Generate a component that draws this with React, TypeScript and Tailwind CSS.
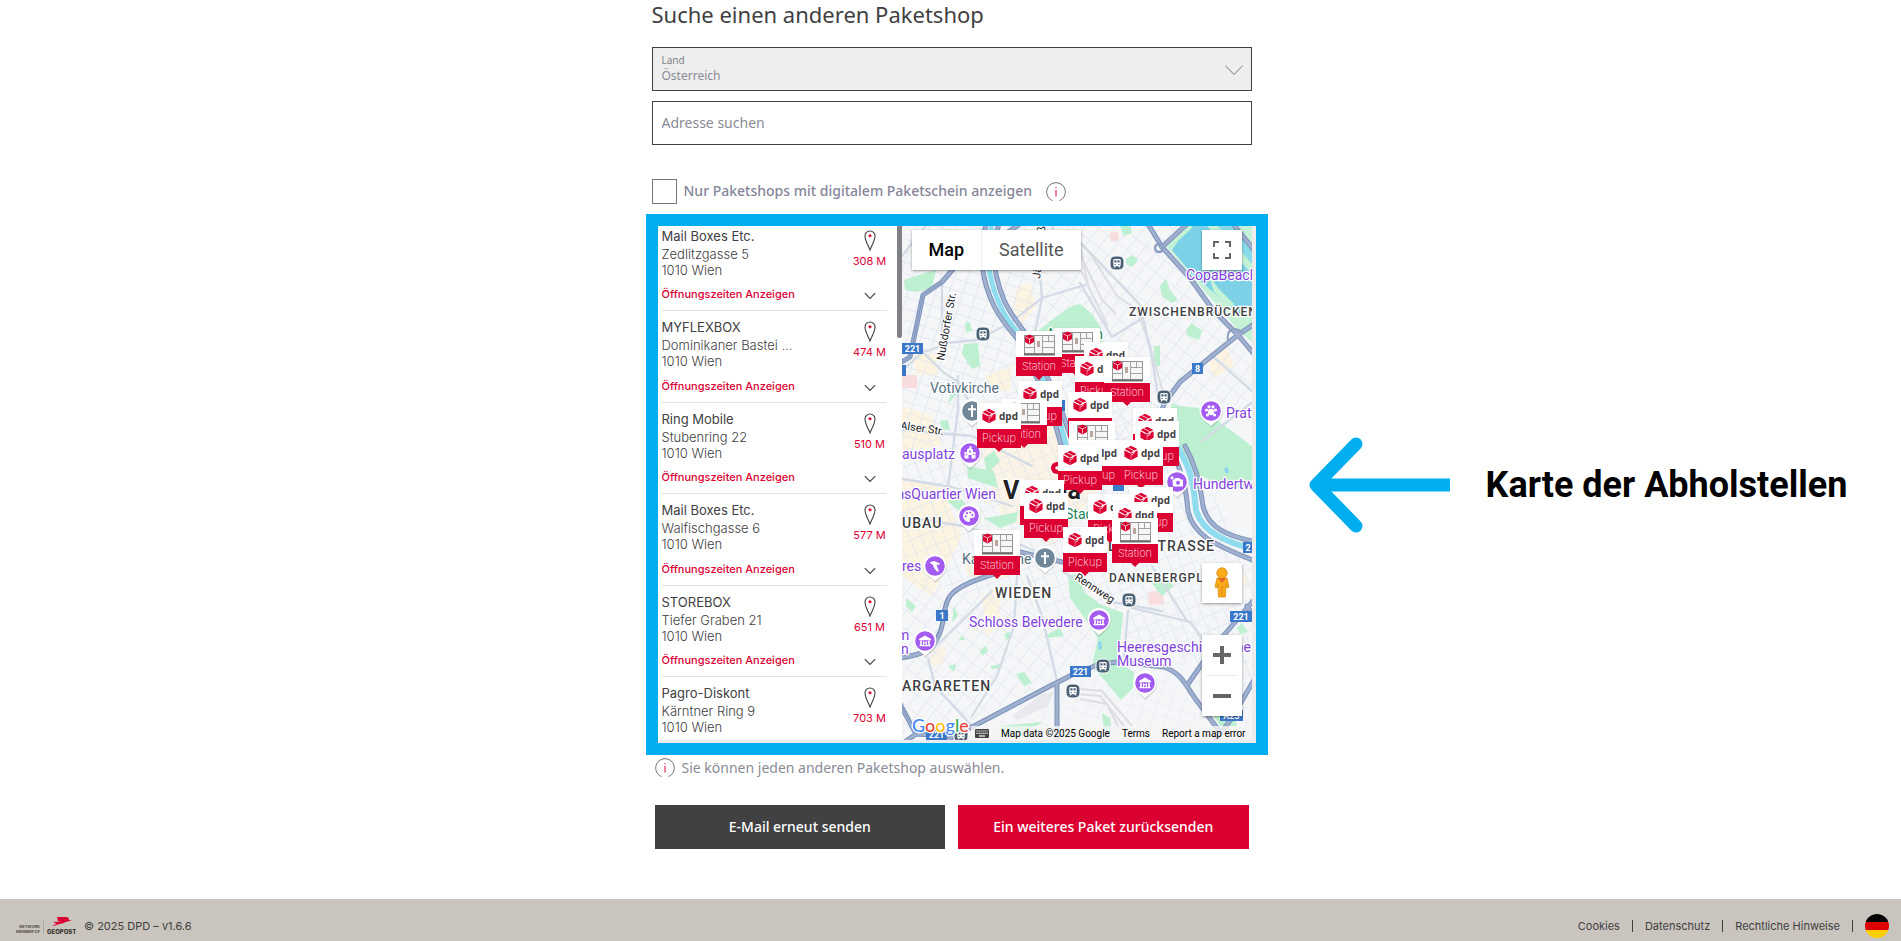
import React from "react";

const shops = [
  { name: "Mail Boxes Etc.", street: "Zedlitzgasse 5", city: "1010 Wien", distance: "308 M" },
  { name: "MYFLEXBOX", street: "Dominikaner Bastei ...", city: "1010 Wien", distance: "474 M" },
  { name: "Ring Mobile", street: "Stubenring 22", city: "1010 Wien", distance: "510 M" },
  { name: "Mail Boxes Etc.", street: "Walfischgasse 6", city: "1010 Wien", distance: "577 M" },
  { name: "STOREBOX", street: "Tiefer Graben 21", city: "1010 Wien", distance: "651 M" },
  { name: "Pagro-Diskont", street: "Kärntner Ring 9", city: "1010 Wien", distance: "703 M" },
];

function InfoIcon() {
  return (
    <svg width="20" height="20" viewBox="0 0 20 20" fill="none" aria-hidden="true" className="shrink-0">
      <path d="M6.5 18.6A9.3 9.3 0 1 1 13.5 18.6" stroke="#6f6f74" strokeWidth="1" />
      <path d="M10 8v6.5M10 5v1.2" stroke="#dc0032" strokeWidth="1" />
    </svg>
  );
}

function ShopPin() {
  return (
    <svg width="12" height="21" viewBox="0 0 12 21" fill="none" aria-hidden="true">
      <path d="M6 20C4.5 16 1 10.500 1 6a5 5 0 0 1 10 0c0 4.500-3.500 10-5 14z" stroke="#414042" strokeWidth="1.100" />
      <path d="M6 4.300v3M4.500 5.800h3" stroke="#dc0032" strokeWidth="1.400" />
    </svg>
  );
}

/* ---------- map ---------- */

type Marker = { kind: "Pickup" | "Station"; x: number; y: number };

const markers: Marker[] = [
  { kind: "Station", x: 152, y: 102 },
  { kind: "Station", x: 114, y: 105 },
  { kind: "Pickup", x: 182, y: 116 },
  { kind: "Pickup", x: 173, y: 130 },
  { kind: "Station", x: 202, y: 131 },
  { kind: "Pickup", x: 116, y: 155 },
  { kind: "Pickup", x: 166, y: 166 },
  { kind: "Station", x: 99, y: 173 },
  { kind: "Pickup", x: 75, y: 177 },
  { kind: "Pickup", x: 231, y: 182 },
  { kind: "Pickup", x: 233, y: 195 },
  { kind: "Station", x: 167, y: 195 },
  { kind: "Pickup", x: 174, y: 214 },
  { kind: "Pickup", x: 217, y: 214 },
  { kind: "Pickup", x: 156, y: 219 },
  { kind: "Pickup", x: 118, y: 254 },
  { kind: "Pickup", x: 227, y: 261 },
  { kind: "Pickup", x: 122, y: 267 },
  { kind: "Pickup", x: 186, y: 268 },
  { kind: "Pickup", x: 211, y: 276 },
  { kind: "Station", x: 210, y: 292 },
  { kind: "Pickup", x: 161, y: 301 },
  { kind: "Station", x: 72, y: 304 },
];

function Cube() {
  return (
    <g>
      <path d="M0-7.200 6.400-3.900 0-.6-6.400-3.900z M-6.600-2.800-.5.400V7L-6.600 3.700z M6.600-2.800.5.400V7L6.600 3.700z" fill="#dc0032" />
      <path d="M0-.6V7" stroke="#dc0032" strokeWidth="1.200" />
      <path d="M-3.200-5.500 3-2.300V.4L.2 2" stroke="#fff" strokeWidth=".8" fill="none" />
    </g>
  );
}

function MapMarker({ kind, x, y }: Marker) {
  const w = kind === "Pickup" ? 44 : 46;
  return (
    <g transform={`translate(${x} ${y})`}>
      <rect x="-.5" y="-.5" width={w + 1} height="27" fill="#000" opacity=".05" />
      <rect width={w} height="26" fill="#fff" />
      <path d={`M0 26h${w}v19h-${w / 2 - 4}l-4 4-4-4H0z`} fill="#dc0032" />
      {kind === "Pickup" ? (
        <>
          <g transform="translate(12 13)">
            <Cube />
          </g>
          <text x="22" y="17" fontSize="10" fontWeight="700" fill="#414042" className="font-['Open_Sans',sans-serif]">
            dpd
          </text>
        </>
      ) : (
        <g>
          <rect x="8.500" y="4.500" width="30" height="18" fill="#f6f6f6" stroke="#8b8b8b" strokeWidth=".9" />
          <path d="M18.500 4.500v18M26.500 4.500v18M26.500 10.500h12M26.500 16.500h12M32.500 4.500v6M8.500 16.500h10" stroke="#9a9a9a" strokeWidth=".9" />
          <path d="M8 23.500h31" stroke="#6e6e6e" strokeWidth="2" />
          <rect x="21" y="10" width="3" height="6" fill="#b9a79f" />
          <path d="M13.500 3.500 18 5.500V11l-4.500 2.500L9 11V5.500z" fill="#dc0032" />
          <path d="M9.500 6 13.500 8l4-2M13.500 8v4.500" stroke="#fff" strokeWidth=".7" fill="none" />
        </g>
      )}
      <text x={w / 2} y="39" textAnchor="middle" fontSize="11" fill="#ffe3e8" className="font-['Inter',sans-serif] font-extralight">
        {kind}
      </text>
    </g>
  );
}

function Poi({ x, y, color, children }: { x: number; y: number; color: string; children?: React.ReactNode }) {
  return (
    <g transform={`translate(${x} ${y})`}>
      <path d="M0 16C-3 12-11.500 8-11.500-.5a11.500 11.500 0 0 1 23 0C11.500 8 3 12 0 16z" fill="#777" opacity=".25" transform="translate(.5 1)" />
      <path d="M0 15C-3 11.500-11.500 8-11.500-.5a11.500 11.500 0 0 1 23 0C11.500 8 3 11.500 0 15z" fill="#fff" />
      <circle r="9.800" fill={color} />
      <g fill="#fff">{children}</g>
    </g>
  );
}

const museum = (
  <>
    <path d="M-6-2 0-5.500 6-2v1.200H-6zM-5.500 4h11v1.300h-11z" />
    <path d="M-4.800-.5h1.600v4.500h-1.600zM3.200-.5h1.600V4H3.200zM-2 0 0 1.500 2 0v4H.9V2L0 2.700-.9 2v2H-2z" />
  </>
);
const cross = <path d="M-1-6h2v3.200h3v2H1V6h-2V-.8h-3v-2h3z" />;

function Transit({ x, y }: { x: number; y: number }) {
  return (
    <g transform={`translate(${x} ${y})`}>
      <rect x="-7" y="-7" width="14" height="14" rx="5" fill="#4a6175" stroke="#fff" strokeWidth="1" />
      <path d="M-2.500-4h5a1.200 1.200 0 0 1 1.200 1.200V2a1.200 1.200 0 0 1-1 1.200l1 1.300H2.300L1.300 3.200h-2.600l-1 1.300h-1.400l1-1.300a1.200 1.200 0 0 1-1-1.200v-4.800A1.200 1.200 0 0 1-2.500-4z" fill="#fff" />
      <path d="M-2.600-2.700h2.100v2.300h-2.100zM.5-2.700h2.100v2.300H.5zM-2.500 1h1.200v1h-1.200zM1.300 1h1.200v1H1.300z" fill="#4a6175" />
    </g>
  );
}

function Shield({ x, y, w, label }: { x: number; y: number; w: number; label: string }) {
  return (
    <g>
      <rect x={x} y={y} width={w} height="11" fill="#3b78c9" />
      <text x={x + w / 2} y={y + 9} fontSize="9" fontWeight="700" fill="#fff" textAnchor="middle">
        {label}
      </text>
    </g>
  );
}

const highways = [
  "M0 136 8 131 21 69 40 56 52 42 118 -2",
  "M84 -2C76 30 80 55 92 80C100 96 108 104 118 116L148 180 160 222",
  "M97 -2C88 24 92 50 102 74C110 92 122 104 130 116L158 180 170 215",
  "M270 226C280 245 284 262 286 285C292 312 318 320 350 334",
  "M283 220C292 236 298 254 301 280C306 302 326 310 350 315",
  "M246 -2 260 21 288 52 311 84 336 109 352 128",
  "M260 21 285 -2",
  "M352 98 336 109 311 129 278 156 262 178 258 190",
  "M331 -2 352 24",
  "M95 347C80 352 58 358 48 370C38 385 46 400 30 420C22 428 10 430 -2 432",
  "M-2 478 14 508 30 509M14 508 0 518",
  "M45 514 70 501 150 459 170 449 195 439 215 436 262 441C282 448 284 462 298 479L318 506",
  "M155 459V516",
  "M286 458 311 422 345 382 352 374",
  "M345 380 352 392",
  "M352 454 330 492 312 516",
  "M118 326 160 336",
];

const avenues = [
  "M3 142 21 126 41 146 56 156 75 190",
  "M40 56 40 120 21 126",
  "M43 117 75 114 108 97 140 72 183 59",
  "M152 -2 138 50 140 72 132 112",
  "M178 57 210 111 241 92 250 132 256 170",
  "M56 150 56 184 46 261",
  "M0 253 50 261 110 280",
  "M0 290 60 300 100 310 143 330",
  "M0 204 70 210 130 240",
  "M28 426 60 395 90 365",
  "M26 432 33 460 70 500",
  "M115 350 112 400 95 450 70 490",
  "M125 350 140 390 155 455",
  "M230 382 288 396 310 425",
  "M226 385 222 430",
  "M160 345 210 376 260 385",
  "M250 340 285 395",
  "M178 16 245 86",
  "M300 215 352 175",
  "M0 30 25 -2",
  "M310 130 350 165",
];

function StreetMap() {
  return (
    <svg
      viewBox="0 0 350 514"
      preserveAspectRatio="xMidYMid slice"
      className="block h-full w-full font-['Roboto',sans-serif]"
      role="img"
      aria-label="Karte von Wien mit Paketshops"
    >
      <defs>
        <pattern id="gridA" width="13" height="11" patternUnits="userSpaceOnUse" patternTransform="rotate(18)">
          <path d="M0 0H13M0 0V11" stroke="#e1e6ee" strokeWidth="1.600" />
        </pattern>
        <pattern id="gridB" width="12" height="15" patternUnits="userSpaceOnUse" patternTransform="rotate(38)">
          <path d="M0 0H12M0 0V15" stroke="#e3e8ef" strokeWidth="1.600" />
        </pattern>
        <pattern id="gridC" width="11" height="14" patternUnits="userSpaceOnUse" patternTransform="rotate(-22)">
          <path d="M0 0H11M0 0V14" stroke="#e3e8ef" strokeWidth="1.600" />
        </pattern>
      </defs>
      <rect width="350" height="514" fill="#f5f6f8" />
      <g fill="#fcf3e0">
        <path d="M115 60 128 58 134 80 120 98 112 85zM84 150 110 140 108 164 86 166zM10 128 34 128 36 150 14 148z" />
        <path d="M0 250 40 262 60 310 30 370 0 350zM0 180 30 190 40 220 0 225z" />
        <path d="M90 190 160 190 200 260 150 320 100 290 80 230z" opacity=".8" />
        <path d="M305 130 325 122 332 140 312 152zM80 370 100 362 96 400 84 410zM60 330 110 330 104 352 66 350z" />
        <path d="M30 420 44 420 42 438 28 440zM300 340 345 350 350 360 310 352z" opacity=".7" />
      </g>
      <path d="M0 149H15V162H0zM207 8 216 5 217 14 209 16zM246 366 261 364 262 378 247 379z" fill="#fbdcdc" />
      <path d="M0 0H160L130 110 60 180 0 240z" fill="url(#gridA)" />
      <path d="M160 0H350V180L200 220 130 110z" fill="url(#gridB)" />
      <path d="M0 240 60 180 130 110 280 220 350 330V460L200 400 0 350z" fill="url(#gridC)" />
      <path d="M0 350 200 400 160 450 60 500 0 514z" fill="url(#gridB)" />
      <path d="M200 400 350 380V514H60L160 450z" fill="url(#gridA)" opacity=".5" />

      <g fill="#bdefd1">
        <path d="M136 105 155 90 170 80 178 78 190 88 199 102 204 135 150 135z" />
        <path d="M2 54 20 48 34 44 30 62 14 66 3 64zM62 118 76 117 78 140 70 143 60 128zM63 97 68 96 70 105 64 106z" />
        <path d="M258 60 264 53 268 64 276 74 270 77 260 70zM284 104 290 97 300 105 297 114 286 110zM224 33 230 29 236 34 230 41 224 38z" />
        <path d="M217 -2 228 -2 230 7 222 10z" />
        <path d="M270 177 278 180 298 182 330 205 352 222V265L335 262 310 255 293 247 278 225 264 205z" />
        <path d="M65 240 92 245 96 262 66 252zM82 292 96 290 116 286 114 296 98 302zM45 275 58 272 78 292 72 298 56 284z" />
        <path d="M38 195 46 194 48 204 40 204zM52 156 58 164 46 178zM85 248 82 232 92 225 98 235z" />
        <path d="M166 349 176 348 182 366 198 378 221 387 216 436 232 446 231 462 219 474 204 456 190 440 196 412 184 394 168 372z" />
        <path d="M142 410 158 402 162 410 144 412zM114 448 122 446 130 457 122 460zM78 424 84 420 86 425 80 430zM46 440 54 438 52 446zM102 408 108 406 110 412 104 414zM88 440 98 438 100 442 90 443z" />
        <path d="M98 500 140 496 124 508 100 508zM52 380 56 390 50 396zM4 372 14 380 10 386 4 380zM200 487 208 492 210 508 202 504zM56 414 60 410 64 414zM310 488 330 480 335 500 318 500z" />
        <path d="M252 120 258 120 258 140 252 140zM248 355 262 350 272 360 260 370zM335 402 340 397 346 406 338 408z" />
      </g>
      <path d="M264 20 289 -2H352V118L336 104 300 62z" fill="#c5f1d6" />
      <path d="M276 15 288 4 292 -2H303L352 50V86L338 90 318 72 290 48 270 24z" fill="#7dd1e6" />
      <path d="M314 -2H328L352 24V40z" fill="#8adbe9" />
      <path d="M306 48 316 62 332 78 328 82 312 66z" fill="#c5f1d6" />
      <path d="M196 416 199 415 200 423 197 424zM322 244l3-4 2 6-2 2z" fill="#8bd5f2" />

      <g fill="none" stroke="#dcdee2" strokeWidth="1">
        <path d="M176 14 190 30 215 70 235 84 248 120 262 170M178 18 186 60 206 100M176 24 200 74 214 88M174 35 186 58" strokeWidth="2" />
        <path d="M178 463 200 465 230 500M176 468 198 470 226 505M178 473 205 478 220 508" strokeWidth="2" />
      </g>
      <path d="M110 490 140 468 152 466 146 480 116 494z" fill="#e8e9ec" />

      <g fill="none" strokeLinejoin="round" strokeLinecap="round">
        {avenues.map((d) => (
          <path key={d} d={d} stroke="#d3dbe6" strokeWidth="2.300" />
        ))}
        <path d="M90 -2C83 28 86 52 97 77C104 94 114 104 124 116L154 182 164 218" stroke="#8fdcee" strokeWidth="5" />
        <path d="M276 222C290 244 292 262 294 284C300 306 322 315 350 323" stroke="#8fdcee" strokeWidth="6" />
        {highways.map((d) => (
          <path key={d} d={d} stroke="#7c92bb" strokeWidth="5" />
        ))}
        {highways.map((d) => (
          <path key={d} d={d} stroke="#a0b0cf" strokeWidth="3" />
        ))}
        <circle cx="257" cy="22" r="4" stroke="#8c9fc3" strokeWidth="2.500" />
        <path d="M326 114C324 104 332 100 340 106" stroke="#8c9fc3" strokeWidth="2" />
        <path d="M0 136 8 131 21 69 40 56M45 372C38 386 43 400 30 420M0 481 14 508" stroke="#7c92bb" strokeWidth="1" />
      </g>

      <Shield x={0} y={117} w={21} label="221" />
      <rect x="0" y="139" width="4" height="11" fill="#3b78c9" />
      <Shield x={290} y={137} w={11} label="8" />
      <rect x="158" y="174" width="5" height="11" fill="#3b78c9" />
      <rect x="211" y="255" width="11" height="10" fill="#3b78c9" />
      <Shield x={341} y={316} w={10} label="2" />
      <Shield x={34} y={384} w={12} label="1" />
      <Shield x={168} y={440} w={21} label="221" />
      <Shield x={328} y={385} w={22} label="221" />
      <Shield x={318} y={484} w={23} label="A23" />
      <Shield x={24} y={503} w={21} label="221" />

      <Transit x={81} y={108} />
      <Transit x={215} y={37} />
      <Transit x={262} y={171} />
      <Transit x={227} y={374} />
      <Transit x={201} y={440} />
      <Transit x={171} y={465} />
      <Transit x={59} y={509} />

      <Poi x={70} y={185} color="#71889a">{cross}</Poi>
      <Poi x={143} y={332} color="#71889a">{cross}</Poi>
      <Poi x={68} y={227} color="#a35bf0">
        <path d="M-5.500 5.500V-1h2.500v-2.500L-.5-5V-7l3 1-2 1L3-3.500V-1h2.500v6.500H1.500V2h-3v3.500z" />
        <path d="M-.8-2.500H.8v2H-.8zM-4.300.8h1.200v1.500h-1.200zM3.100.8h1.200v1.500H3.100z" fill="#a35bf0" />
      </Poi>
      <Poi x={67} y={290} color="#a35bf0">
        <path d="M0-6a6 6 0 1 0 0 12c1.500 0 1-1.500.8-2.300C.5 2.300 1.500 2 3 2c2 0 3-1 3-3 0-3-3-5-6-5z" />
        <g fill="#a35bf0">
          <circle cx="-3.200" cy=".5" r="1.100" />
          <circle cx="-2" cy="-2.800" r="1.100" />
          <circle cx="1.200" cy="-3.500" r="1.100" />
          <circle cx="3.500" cy="-1" r="1.100" />
        </g>
      </Poi>
      <Poi x={33} y={340} color="#a35bf0">
        <path d="M-5.500-3.500-1-5 5-2.500 4-1 1.500-1.500 2.500 1.500 4 5.500H2L-1 2-2-1z" />
      </Poi>
      <Poi x={309} y={185} color="#a35bf0">
        <circle r="3.200" cy="1" />
        <circle cx="-4.500" cy="-1" r="1.600" />
        <circle cx="4.500" cy="-1" r="1.600" />
        <circle cx="-2" cy="-4.200" r="1.600" />
        <circle cx="2" cy="-4.200" r="1.600" />
        <circle cx="-3.600" cy="4" r="1.600" />
        <circle cx="3.600" cy="4" r="1.600" />
      </Poi>
      <Poi x={275} y={256} color="#a35bf0">
        <path d="M-4.500-2.500h2L-1.500-4h4l1 1.500h2.500V4.500h-10z" />
        <circle cx="1" cy=".8" r="2" fill="#a35bf0" />
        <path d="M-5.500-6h1.200v3.600h-1.200zM-6.700-4.800h3.600v1.200h-3.600z" />
      </Poi>
      <Poi x={197} y={394} color="#a35bf0">{museum}</Poi>
      <Poi x={23} y={415} color="#a35bf0">{museum}</Poi>
      <Poi x={243} y={457} color="#a35bf0">{museum}</Poi>

      <g stroke="#fff" strokeWidth="2.500" strokeLinejoin="round" paintOrder="stroke">
        <g fontSize="14" fill="#7f42dd">
          <text x="284" y="54">CopaBeach</text>
          <text x="324" y="192">Prater</text>
          <text x="291" y="263">Hundertwasser</text>
          <text x="0" y="233">ausplatz</text>
          <text x="94" y="273" textAnchor="end">nsQuartier Wien</text>
          <text x="0" y="345">res</text>
          <text x="67" y="401">Schloss Belvedere</text>
          <text x="-5" y="414">m</text>
          <text x="-1" y="428">n</text>
          <text x="215" y="426">Heeresgeschichtliche</text>
          <text x="215" y="440">Museum</text>
        </g>
        <g fontSize="14" fill="#54707f">
          <text x="28" y="167">Votivkirche</text>
          <text x="60" y="338">Karlskirche</text>
        </g>
        <g fontSize="14" fill="#188557">
          <text x="201" y="113" textAnchor="end">Augarten</text>
          <text x="163" y="293">Stadtpark</text>
        </g>
        <g fontSize="14" fontWeight="500" fill="#3c4043">
          <text x="227" y="90" fontSize="12" letterSpacing="1">ZWISCHENBRÜCKEN</text>
          <text x="0" y="302" letterSpacing="1">UBAU</text>
          <text x="206" y="325" letterSpacing="1">LANDSTRASSE</text>
          <text x="207" y="356" fontSize="12" letterSpacing="1">DANNEBERGPLATZ</text>
          <text x="93" y="372" letterSpacing="1">WIEDEN</text>
          <text x="0" y="465" letterSpacing="1">ARGARETEN</text>
        </g>
        <g fontSize="12" fill="#202124">
          <text transform="translate(42 135) rotate(-80)" fontSize="11">Nußdorfer Str.</text>
          <text transform="translate(138 53) rotate(-84)" fontSize="11">Jägerstraße</text>
          <text transform="translate(-2 203) rotate(8)" fontSize="11">Alser Str.</text>
          <text transform="translate(172 353) rotate(33)" fontSize="11">Rennweg</text>
        </g>
        <text x="101" y="273" fontSize="25" fontWeight="700" fill="#202124">Vienna</text>
      </g>

      <circle cx="155" cy="242" r="6" fill="#dc0032" />
      <circle cx="155" cy="242" r="1.800" fill="#fff" />
      {markers.map((m) => (
        <MapMarker key={`${m.x}-${m.y}`} {...m} />
      ))}
    </svg>
  );
}

function PickupMap() {
  return (
    <div className="relative min-w-0 flex-1 overflow-hidden">
      <StreetMap />
      <div className="absolute left-[10px] top-1 flex h-10 bg-white font-['Roboto',sans-serif] text-lg shadow-sm shadow-black/30">
        <button type="button" className="px-[17px] font-medium text-black">Map</button>
        <button type="button" className="border-l border-[#eeeeee] px-[17px] text-[#565656]">Satellite</button>
      </div>
      <button type="button" aria-label="Vollbild" className="absolute right-[10px] top-1 flex size-10 items-center justify-center bg-white shadow-sm shadow-black/30">
        <svg width="18" height="18" viewBox="0 0 18 18" fill="none" stroke="#666" strokeWidth="2" aria-hidden="true">
          <path d="M1 6V1h5M12 1h5v5M17 12v5h-5M6 17H1v-5" />
        </svg>
      </button>
      <button type="button" aria-label="Street View" className="absolute bottom-[137px] right-[10px] flex size-10 items-center justify-center bg-white shadow-sm shadow-black/30">
        <svg width="20" height="32" viewBox="0 0 20 32" aria-hidden="true">
          <path d="M5 11h10l2 9-2 1-1-4-.5 13h-7L6 17l-1 4-2-1z" fill="#fbab18" stroke="#d98a10" strokeWidth=".8" strokeLinejoin="round" />
          <path d="M10 19v11" stroke="#d98a10" strokeWidth="1" />
          <path d="M6 11h8l-4 5z" fill="#e2622a" />
          <circle cx="10" cy="6" r="5.200" fill="#fbab18" stroke="#d98a10" strokeWidth=".8" />
        </svg>
      </button>
      <div className="absolute bottom-6 right-[10px] flex w-10 flex-col items-center bg-white shadow-sm shadow-black/30">
        <button type="button" aria-label="Vergrößern" className="flex size-10 items-center justify-center">
          <svg width="18" height="18" viewBox="0 0 18 18" aria-hidden="true">
            <path d="M7 0h4v7h7v4h-7v7H7v-7H0V7h7z" fill="#666" />
          </svg>
        </button>
        <span className="h-px w-[30px] bg-[#e6e6e6]" />
        <button type="button" aria-label="Verkleinern" className="flex size-10 items-center justify-center">
          <svg width="18" height="4" viewBox="0 0 18 4" aria-hidden="true">
            <path d="M0 0h18v4H0z" fill="#666" />
          </svg>
        </button>
      </div>
      <svg width="60" height="26" viewBox="0 0 60 26" role="img" aria-label="Google" className="absolute bottom-0 left-2">
        <text x="2" y="18" fontSize="18" fontWeight="500" stroke="#fff" strokeWidth="2.500" strokeLinejoin="round" paintOrder="stroke" className="font-['Lato',sans-serif]">
          <tspan fill="#4285f4">G</tspan>
          <tspan fill="#ea4335">o</tspan>
          <tspan fill="#fbbc04">o</tspan>
          <tspan fill="#4285f4">g</tspan>
          <tspan fill="#34a853">l</tspan>
          <tspan fill="#ea4335">e</tspan>
        </text>
      </svg>
      <div className="absolute bottom-0 right-0 flex h-[14px] items-center gap-3 bg-[#f5f5f5]/80 pl-1 pr-[6px] font-['Roboto',sans-serif] text-[10px] text-black">
        <button type="button" aria-label="Tastaturkürzel">
          <svg width="14" height="9" viewBox="0 0 14 9" aria-hidden="true">
            <rect width="14" height="9" rx="1" fill="#444" />
            <path d="M1.500 2h11M1.500 4.300h11" stroke="#fff" strokeWidth="1.200" strokeDasharray="1.200 .8" />
            <path d="M4 7h6" stroke="#fff" strokeWidth="1.200" />
          </svg>
        </button>
        <span>Map data ©2025 Google</span>
        <a href="#terms">Terms</a>
        <a href="#report">Report a map error</a>
      </div>
    </div>
  );
}

/* ---------- shop list ---------- */

function ShopList() {
  return (
    <div className="flex w-[244px] shrink-0 bg-white font-['Inter',sans-serif]">
      <ul className="flex-1 overflow-hidden pl-1 pr-[10px]">
        {shops.map((shop) => (
          <li
            key={shop.distance}
            className="flex h-[91px] shrink-0 flex-col justify-between border-b border-[#e2e2e2] pb-2 pt-2 first:h-[85px] first:pt-[2px] last:border-0 even:h-[92px]"
          >
            <div className="flex justify-between">
              <div className="text-[13px] leading-4 text-[#414042]">
                <h3 className="mb-[2px]">{shop.name}</h3>
                <p className="font-light">{shop.street}</p>
                <p className="font-light">{shop.city}</p>
              </div>
              <div className="flex w-[34px] flex-col items-center gap-[2px] pt-[2px] text-[11px] leading-4 text-[#dc0032]">
                <ShopPin />
                <span className="whitespace-nowrap">{shop.distance}</span>
              </div>
            </div>
            <button type="button" className="flex items-center justify-between text-[11px] font-medium leading-4 text-[#dc0032]">
              Öffnungszeiten Anzeigen
              <span className="flex w-[34px] justify-center pt-[3px]">
                <svg width="12" height="8" viewBox="0 0 12 8" fill="none" stroke="#414042" strokeWidth="1.100" aria-hidden="true">
                  <path d="M.8 1.200 6 6.500l5.200-5.300" />
                </svg>
              </span>
            </button>
          </li>
        ))}
      </ul>
      <div className="h-28 w-[5px] rounded-b-sm bg-[#808185]" />
    </div>
  );
}

export default function App() {
  return (
    <div className="flex min-h-screen flex-col bg-white font-['Noto_Sans',sans-serif] text-[#414042]">
      <main className="grid grow grid-cols-[1fr_600px_1fr] content-start pl-[2px]">
        <section className="col-start-2">
          <h1 className="text-[22px] leading-7">Suche einen anderen Paketshop</h1>
          <form className="mt-[19px]">
            <div className="relative">
              <label htmlFor="country" className="absolute left-[10px] top-[6px] text-[10px] leading-[14px] text-[#808285]">
                Land
              </label>
              <select
                id="country"
                disabled
                className="block h-11 w-full appearance-none border border-[#414042] bg-[#eeeeee] pl-[9px] pt-[14px] text-xs text-[#8a8b96] opacity-100"
              >
                <option>Österreich</option>
              </select>
              <svg width="18" height="11" viewBox="0 0 18 11" fill="none" stroke="#77787b" aria-hidden="true" className="pointer-events-none absolute right-[9px] top-[18px]">
                <path d="M.5.800 9 9.500 17.500.8" />
              </svg>
            </div>
            <input
              type="text"
              aria-label="Adresse suchen"
              placeholder="Adresse suchen"
              className="mt-[10px] block h-11 w-full border border-[#414042] px-[9px] pb-[2px] text-sm placeholder:text-[#8a8b96]"
            />
            <div className="mt-[34px] flex h-[25px] items-center">
              <input id="digital" type="checkbox" className="size-[25px] appearance-none border border-[#77787b] bg-white" />
              <label htmlFor="digital" className="ml-[7px] pb-[2px] text-sm font-medium text-[#85869a]">
                Nur Paketshops mit digitalem Paketschein anzeigen
              </label>
              <button type="button" aria-label="Information" className="ml-[14px]">
                <InfoIcon />
              </button>
            </div>
          </form>
        </section>

        <section className="col-start-2 -ml-[6px] -mr-4 mt-[10px] border-[12px] border-[#00aeef]" aria-label="Karte der Abholstellen">
          <div className="flex h-[517px] bg-[#ececed] pb-[3px] pr-1">
            <ShopList />
            <PickupMap />
          </div>
        </section>
        <aside className="col-start-3 mt-[10px] flex items-center gap-9 pl-14">
          <svg width="142" height="98" viewBox="0 0 142 98" fill="none" stroke="#00aeef" strokeWidth="13" aria-hidden="true" className="shrink-0">
            <path d="M142 49H10" />
            <path d="M48 8 8 49l40 41" strokeLinecap="round" strokeLinejoin="round" />
          </svg>
          <p className="whitespace-nowrap font-['Roboto',sans-serif] text-4xl font-bold text-black">Karte der Abholstellen</p>
        </aside>

        <section className="col-start-2">
          <p className="mt-[3px] flex h-5 items-center gap-[7px] pl-[3px] text-sm text-[#8a8b96]">
            <InfoIcon />
            Sie können jeden anderen Paketshop auswählen.
          </p>
          <div className="mt-[27px] grid grid-cols-2 gap-[13px] px-[3px] text-sm font-medium text-white">
            <button type="button" className="h-11 bg-[#414042]">E-Mail erneut senden</button>
            <button type="button" className="h-11 bg-[#dc0032]">Ein weiteres Paket zurücksenden</button>
          </div>
        </section>
      </main>

      <footer className="flex h-[42px] items-center justify-between bg-[#c9c4bd] pl-4 pr-3 pt-3 font-['Inter',sans-serif] text-[11px] text-[#414042]">
        <div className="flex items-center gap-2">
          <svg width="60" height="18" viewBox="0 0 60 18" role="img" aria-label="Network member of Geopost">
            <g fontSize="4" fontWeight="700" fill="#55504c" className="font-['Inter',sans-serif]">
              <text x="24" y="11" textAnchor="end">NETWORK</text>
              <text x="24" y="16" textAnchor="end">MEMBER OF</text>
            </g>
            <path d="M27.500 3v14" stroke="#aaa59f" strokeWidth=".8" />
            <path d="M41 0h9c2 0 3 1 3 3h3L36 9.500l8-5.500h-2zM37 5l13-1-3 2.500h-7z" fill="#dc0032" />
            <text x="31" y="16.500" fontSize="6" fontWeight="800" fill="#35302e" className="font-['Inter',sans-serif]">GEOPOST</text>
          </svg>
          <span>© 2025 DPD – v1.6.6</span>
        </div>
        <nav className="flex items-center gap-3">
          <a href="#cookies">Cookies</a>
          <span className="h-3 w-px bg-[#414042]" />
          <a href="#datenschutz">Datenschutz</a>
          <span className="h-3 w-px bg-[#414042]" />
          <a href="#hinweise">Rechtliche Hinweise</a>
          <span className="h-3 w-px bg-[#414042]" />
          <button type="button" aria-label="Deutsch" className="flex size-6 flex-col overflow-hidden rounded-full">
            <span className="w-full flex-1 bg-black" />
            <span className="w-full flex-1 bg-[#dd0000]" />
            <span className="w-full flex-1 bg-[#ffce00]" />
          </button>
        </nav>
      </footer>
    </div>
  );
}
